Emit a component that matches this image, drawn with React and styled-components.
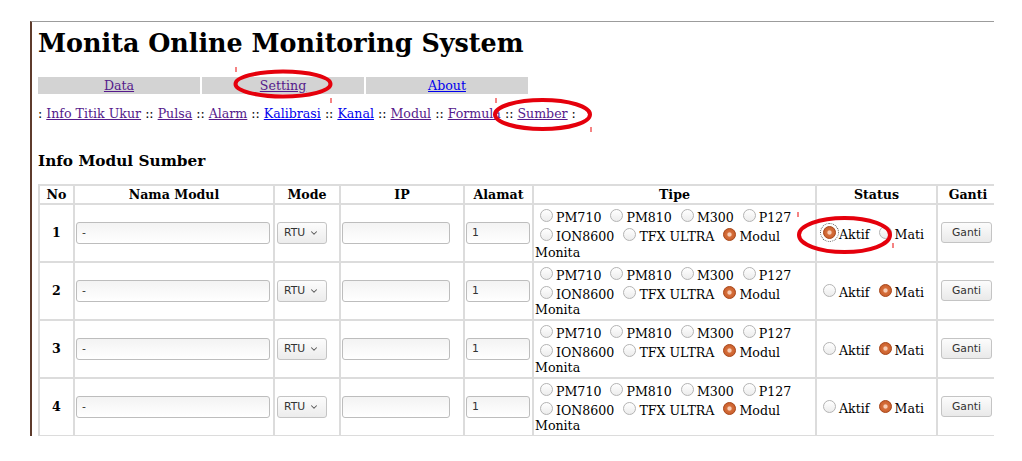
import React from "react";
import styled, { createGlobalStyle } from "styled-components";
import { ChevronDown } from "lucide-react";

const GlobalStyle = createGlobalStyle`
	html, body {
		margin: 0;
		padding: 0;
		background: #fff;
	}
	body {
		font-family: "DejaVu Serif", "Liberation Serif", serif;
		font-size: 12.6px;
		color: #000;
	}
`;

const menu = [
	{ label: "Data", visited: true },
	{ label: "Setting", visited: true },
	{ label: "About", visited: false },
];

const crumbs = [
	{ label: "Info Titik Ukur", visited: true },
	{ label: "Pulsa", visited: true },
	{ label: "Alarm", visited: true },
	{ label: "Kalibrasi", visited: false },
	{ label: "Kanal", visited: false },
	{ label: "Modul", visited: true },
	{ label: "Formula", visited: true },
	{ label: "Sumber", visited: true },
];

// widths are grid-line to grid-line, as measured
const columns = [
	{ title: "No", width: 35 },
	{ title: "Nama Modul", width: 200 },
	{ title: "Mode", width: 66 },
	{ title: "IP", width: 124 },
	{ title: "Alamat", width: 69 },
	{ title: "Tipe", width: 283 },
	{ title: "Status", width: 121 },
	{ title: "Ganti", width: 62 },
];

const tipeOptions = ["PM710", "PM810", "M300", "P127", "ION8600", "TFX ULTRA", "Modul Monita"];

const rows = [
	{ no: 1, aktif: true },
	{ no: 2, aktif: false },
	{ no: 3, aktif: false },
	{ no: 4, aktif: false },
];

const App = () => {
	return (
		<Page>
			<GlobalStyle />
			<Frame>
				<Title>Monita Online Monitoring System</Title>

				<TabBar>
					{menu.map((m) => (
						<Tab key={m.label}>
							<Link href="#" $visited={m.visited}>
								{m.label}
							</Link>
						</Tab>
					))}
				</TabBar>

				<Crumbs>
					:{" "}
					{crumbs.map((c, i) => (
						<React.Fragment key={c.label}>
							<Link href="#" $visited={c.visited}>
								{c.label}
							</Link>
							{i < crumbs.length - 1 ? " :: " : " :"}
						</React.Fragment>
					))}
				</Crumbs>

				<SectionTitle>Info Modul Sumber</SectionTitle>

				<Grid>
					<thead>
						<tr>
							{columns.map((c) => (
								<HeadCell key={c.title} $width={c.width}>
									{c.title}
								</HeadCell>
							))}
						</tr>
					</thead>
					<tbody>
						{rows.map((r) => (
							<tr key={r.no}>
								<NoCell>{r.no}</NoCell>
								<Cell>
									<TextField $w={194} defaultValue="-" />
								</Cell>
								<Cell>
									<SelectBox type="button">
										RTU <ChevronDown size={10} strokeWidth={2.5} />
									</SelectBox>
								</Cell>
								<Cell>
									<TextField $w={108} defaultValue="" />
								</Cell>
								<Cell>
									<TextField $w={64} defaultValue="1" />
								</Cell>
								<TipeCell>
									{tipeOptions.map((t) => (
										<React.Fragment key={t}>
											<Radio
												name={`tipe-${r.no}`}
												defaultChecked={t === "Modul Monita"}
											/>
											{t}{" "}
										</React.Fragment>
									))}
								</TipeCell>
								<StatusCell>
									<Radio
										name={`status-${r.no}`}
										defaultChecked={r.aktif}
										$focused={r.aktif}
									/>
									Aktif{" "}
									<Radio name={`status-${r.no}`} defaultChecked={!r.aktif} />
									Mati
								</StatusCell>
								<Cell>
									<Button type="button">Ganti</Button>
								</Cell>
							</tr>
						))}
					</tbody>
				</Grid>
			</Frame>

			<Marks width="1022" height="461" viewBox="0 0 1022 461">
				<g fill="none" stroke="#e5000c" strokeWidth="4">
					<ellipse cx="283" cy="84" rx="47.5" ry="12.5" />
					<ellipse cx="542.5" cy="114.5" rx="47.5" ry="14.5" />
					<ellipse cx="844.5" cy="235" rx="45.5" ry="17" />
				</g>
				<g stroke="#f25a5a" strokeWidth="1.5">
					<line x1="236" y1="67" x2="236" y2="72" />
					<line x1="331" y1="98" x2="331" y2="103" />
					<line x1="496" y1="98" x2="496" y2="103" />
					<line x1="591" y1="127" x2="591" y2="132" />
					<line x1="798" y1="212" x2="798" y2="217" />
					<line x1="893" y1="243" x2="893" y2="248" />
				</g>
			</Marks>
		</Page>
	);
};

// # STYLED COMPONENTS

const Page = styled.div`
	position: relative;
	width: 1022px;
	height: 461px;
	padding-top: 21px;
	box-sizing: border-box;
	overflow: hidden;
`;

const Frame = styled.div`
	margin-left: 30px;
	width: 964px;
	height: 415px;
	box-sizing: border-box;
	border-top: 1px solid #9c9c9c;
	border-left: 2px solid #5e3b2c;
	padding-left: 6px;
	overflow: hidden;
`;

const Title = styled.h1`
	margin: 5.5px 0 0;
	font-size: 25.4px;
	font-weight: bold;
	line-height: normal;
`;

const TabBar = styled.nav`
	display: flex;
	gap: 2px;
	margin-top: 19px;
`;

const Tab = styled.div`
	flex: 0 0 162px;
	height: 17px;
	line-height: 17px;
	background: #d3d3d3;
	text-align: center;
`;

const Link = styled.a`
	color: ${(p) => (p.$visited ? "#551a8b" : "#0000ee")};
	text-decoration: underline;
`;

const Crumbs = styled.div`
	margin-top: 12.3px;
	line-height: normal;
`;

const SectionTitle = styled.h2`
	margin: 30.8px 0 0;
	font-size: 15.3px;
	font-weight: bold;
	line-height: normal;
`;

const Grid = styled.table`
	margin-top: 14.4px;
	width: 960px;
	table-layout: fixed;
	border-collapse: collapse;
`;

const HeadCell = styled.th`
	width: ${(p) => p.$width - 4}px;
	border: 2px solid #dcdcdc;
	padding: 1px;
	font-weight: bold;
	text-align: center;
	white-space: nowrap;
`;

const Cell = styled.td`
	border: 2px solid #dcdcdc;
	padding: 1px;
	vertical-align: middle;
	white-space: nowrap;
	overflow: hidden;
`;

const NoCell = styled(Cell)`
	font-weight: bold;
	text-align: center;
`;

const TipeCell = styled(Cell)`
	white-space: normal;
	line-height: 15.3px;
`;

const StatusCell = styled(Cell)`
	text-align: left;
`;

const Radio = styled.input.attrs({ type: "radio" })`
	appearance: none;
	box-sizing: border-box;
	width: 13px;
	height: 13px;
	margin: 3px 3px 0 5px;
	border-radius: 50%;
	border: 1px solid #b4b4b4;
	background: linear-gradient(#ffffff, #ececec);
	vertical-align: baseline;

	&:checked {
		border-color: #a9491c;
		background: radial-gradient(circle, #f7cdb5 0 1.6px, #d66f3b 2.6px, #c25522 100%);
	}

	${(p) => p.$focused && "outline: 1px dotted #555; outline-offset: 2px;"}
`;

const TextField = styled.input`
	box-sizing: border-box;
	width: ${(p) => p.$w}px;
	height: 22px;
	margin: 0;
	padding: 0 5px;
	border: 1px solid #bdbdbd;
	border-radius: 3px;
	background: linear-gradient(#f3f3f3, #ffffff);
	font: 10.8px "DejaVu Sans", sans-serif;
	color: #333;
	vertical-align: middle;
`;

const SelectBox = styled.button`
	display: inline-flex;
	align-items: center;
	gap: 4px;
	box-sizing: border-box;
	width: 50px;
	height: 22px;
	margin: 0 0 0 1px;
	padding: 0 6px;
	border: 1px solid #c4c4c4;
	border-radius: 3px;
	background: linear-gradient(#fcfcfc, #ececec);
	font: 10.8px "DejaVu Sans", sans-serif;
	color: #333;
	vertical-align: middle;

	svg {
		color: #555;
	}
`;

const Button = styled.button`
	box-sizing: border-box;
	width: 51px;
	height: 21px;
	margin: 0 0 0 2px;
	padding: 0;
	border: 1px solid #c4c4c4;
	border-radius: 3px;
	background: linear-gradient(#fcfcfc, #e9e9e9);
	font: 10.8px "DejaVu Sans", sans-serif;
	color: #333;
	vertical-align: middle;
`;

const Marks = styled.svg`
	position: absolute;
	top: 0;
	left: 0;
	pointer-events: none;
`;

export default App;
